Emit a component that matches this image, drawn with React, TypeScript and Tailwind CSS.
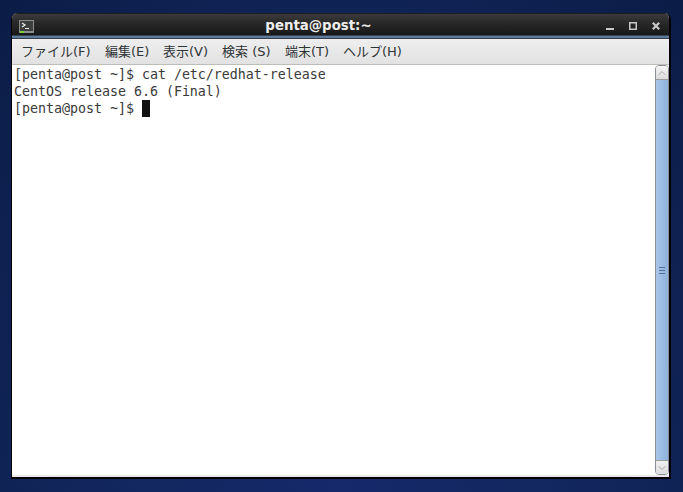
import { ChevronUp, ChevronDown } from "lucide-react";

const menus = [
  { label: "ファイル(F)", w: "w-[84px]" },
  { label: "編集(E)", w: "w-[58px]" },
  { label: "表示(V)", w: "w-[59px]" },
  { label: "検索 (S)", w: "w-[63px]" },
  { label: "端末(T)", w: "w-[58px]" },
  { label: "ヘルプ(H)", w: "w-[70px]" },
];

const lines = ["[penta@post ~]$ cat /etc/redhat-release", "CentOS release 6.6 (Final)"];

function TerminalIcon() {
  return (
    <svg width="15" height="13" viewBox="0 0 15 13" className="block">
      <rect x="0" y="0" width="15" height="13" fill="#8c8e8c" />
      <rect x="1" y="1" width="13" height="10" fill="#3c3f3e" />
      <path d="M3 3 L6 5 L3 7" fill="none" stroke="#eeeeec" strokeWidth="1.2" />
      <path d="M6 8.5 H10" stroke="#eeeeec" strokeWidth="1" />
      <rect x="1" y="11" width="4" height="2" fill="#7fd13b" />
    </svg>
  );
}

export default function App() {
  return (
    <div className="w-[683px] h-[492px] overflow-hidden pl-[11px] pr-[12px] pt-[13px] bg-[radial-gradient(ellipse_at_50%_100%,#15296b_0%,#12265c_55%,#0b1c46_100%)]">
      <div className="flex flex-col h-[466px] rounded-t-[6px] overflow-hidden border-l border-r-2 border-b-2 border-black bg-white">
        {/* title bar */}
        <div className="flex items-center h-[26px] shrink-0 bg-[linear-gradient(180deg,#111111_0%,#3a3a3a_6%,#2a2a2a_35%,#181818_84%,#5d7c9e_90%,#5d7c9e_94%,#222222_100%)] pl-[7px] pr-[9px]">
          <TerminalIcon />
          <div className="flex-1 text-center pr-[3px] font-['DejaVu_Sans',sans-serif] font-bold text-[13.33px] text-[#eeeeec]">
            penta@post:~
          </div>
          <div className="flex items-center gap-[15px]">
            <svg width="8" height="10" viewBox="0 0 8 10" className="block">
              <rect x="0" y="7" width="8" height="2" fill="#c8c8c6" />
            </svg>
            <svg width="8" height="10" viewBox="0 0 8 10" className="block">
              <rect x="0.75" y="1.75" width="6.5" height="6.5" fill="none" stroke="#c8c8c6" strokeWidth="1.5" />
            </svg>
            <svg width="8" height="10" viewBox="0 0 8 10" className="block">
              <path d="M0.8 1.8 L7.2 8.2 M7.2 1.8 L0.8 8.2" stroke="#c8c8c6" strokeWidth="2.2" />
            </svg>
          </div>
        </div>

        {/* menu bar */}
        <div className="flex items-center h-[26px] shrink-0 pl-[2px] bg-[linear-gradient(180deg,#eeeeee_0%,#e2e2e2_100%)] border-b border-[#bdbdb9] font-['DejaVu_Sans','Noto_Sans_CJK_JP',sans-serif] text-[13px] text-[#2e3436]">
          {menus.map((m) => (
            <div key={m.label} className={`${m.w} shrink-0 pl-[7px] whitespace-nowrap`}>
              {m.label}
            </div>
          ))}
        </div>

        {/* terminal + scrollbar */}
        <div className="flex flex-1 min-h-0">
          <div className="flex-1 pl-[2px] pt-[1px] font-['DejaVu_Sans_Mono',monospace] text-[13.33px] tracking-[-0.03px] leading-[17px] text-[#3a3a3a] whitespace-pre">
            {lines.map((l) => (
              <div key={l}>{l}</div>
            ))}
            <div className="flex items-center">
              <span>{"[penta@post ~]$ "}</span>
              <span className="w-2 h-[17px] bg-[#111111]" />
            </div>
          </div>
          <div className="flex flex-col w-[14px] shrink-0 rounded-[4px] border border-[#8a8f96] overflow-hidden">
            <div className="flex items-center justify-center h-[14px] shrink-0 bg-[linear-gradient(180deg,#f5f5f5,#dcdcdc)] border-b border-[#9a9a9a]">
              <ChevronUp size={12} strokeWidth={2} className="text-[#a8a8a8]" />
            </div>
            <div className="flex-1 flex flex-col items-center justify-center gap-[2px] bg-[linear-gradient(90deg,#a9c6e8,#8db2dc)]">
              <div className="w-[6px] h-[1px] bg-[#4f6f96]" />
              <div className="w-[6px] h-[1px] bg-[#4f6f96]" />
              <div className="w-[6px] h-[1px] bg-[#4f6f96]" />
            </div>
            <div className="flex items-center justify-center h-[14px] shrink-0 bg-[linear-gradient(180deg,#f0f0f0,#dcdcdc)] border-t border-[#9a9a9a]">
              <ChevronDown size={12} strokeWidth={2} className="text-[#a8a8a8]" />
            </div>
          </div>
        </div>

        {/* bottom strip */}
        <div className="h-[2px] shrink-0 bg-[#e8e8e8]" />
      </div>
    </div>
  );
}
